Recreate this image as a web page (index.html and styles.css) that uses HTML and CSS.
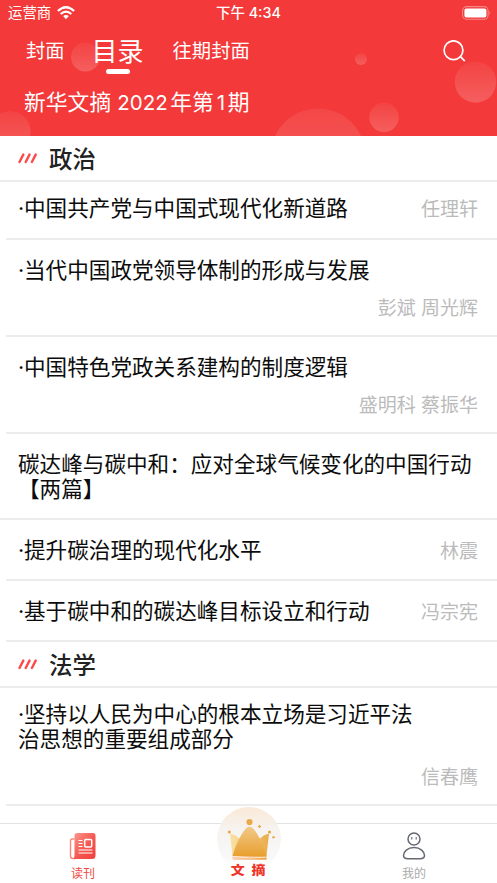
FILE: index.html
```html
<!DOCTYPE html>
<html lang="zh-CN">
<head>
<meta charset="utf-8">
<meta name="viewport" content="width=device-width">
<title>新华文摘</title>
<link rel="stylesheet" href="styles.css">
</head>
<body>
<div class="app">
  <header class="header">
    <svg class="bubbles" viewBox="0 0 497 136" aria-hidden="true">
      <defs>
        <linearGradient id="bubble" x1="0" y1="0" x2="0" y2="1">
          <stop offset="0" stop-color="#fff" stop-opacity=".05"/>
          <stop offset="1" stop-color="#fff" stop-opacity=".19"/>
        </linearGradient>
        <linearGradient id="bigBubble" x1="0" y1="0" x2="0" y2="1">
          <stop offset="0" stop-color="#fff" stop-opacity=".07"/>
          <stop offset="1" stop-color="#fff" stop-opacity=".22"/>
        </linearGradient>
      </defs>
      <g fill="url(#bubble)">
        <circle cx="85.5" cy="57" r="14.5"/>
        <circle cx="361" cy="59" r="6"/>
        <circle cx="475.5" cy="82" r="20.7"/>
        <circle cx="384" cy="117.3" r="14.7"/>
        <circle cx="10" cy="131.500" r="20.500"/>
      </g>
      <circle cx="318" cy="156" r="47.500" fill="url(#bigBubble)"/>
    </svg>
    <div class="status">
      <div class="carrier">运营商
        <svg width="18" height="14" viewBox="0 0 18 14" aria-hidden="true">
          <g fill="none" stroke="#fff" stroke-width="2.300">
            <path d="M.9 5Q9-2.600 17.100 5"/>
            <path d="M3.700 8Q9 3.200 14.300 8"/>
          </g>
          <path d="M6.100 10.100Q9 7.900 11.900 10.100L9 13.200Z" fill="#fff"/>
        </svg>
      </div>
      <div class="clock">下午 4:34</div>
      <svg class="battery" width="29" height="14" viewBox="0 0 29 14" aria-hidden="true">
        <rect x=".6" y=".6" width="25.500" height="12.600" rx="4" fill="none" stroke="#fff" stroke-opacity=".4" stroke-width="1.100"/>
        <rect x="2.400" y="2.400" width="22" height="9" rx="2" fill="#fff"/>
        <path d="M27.500 4.800q1.500 2 0 4.200z" fill="#fff" fill-opacity=".5"/>
      </svg>
    </div>
    <nav class="tabs">
      <span class="tab">封面</span>
      <span class="tab tab-active">目录</span>
      <span class="tab">往期封面</span>
      <svg class="search" width="23" height="23" viewBox="0 0 23 23" fill="none" stroke="#fff" stroke-width="1.700" aria-hidden="true">
        <circle cx="10.500" cy="10.200" r="9.400"/>
        <path d="M17 16.200l4.800 5"/>
      </svg>
    </nav>
    <h1 class="issue"><span>新华文摘</span><span class="year">2022</span><span>年第</span><span class="number">1</span><span>期</span></h1>
  </header>

  <main class="list">
    <h2 class="section">
      <svg width="20" height="11" viewBox="0 0 20 11" aria-hidden="true"><path d="M1.500 9L5.300 1.600M7.700 9L11.500 1.600M13.900 9L17.700 1.600" stroke="#fb4b4b" stroke-width="2.400" stroke-linecap="round"/></svg>
      <span>政治</span>
    </h2>
    <article class="row h58"><p><i>·</i>中国共产党与中国式现代化新道路</p><span class="author">任理轩</span></article>
    <article class="row h97"><p><i>·</i>当代中国政党领导体制的形成与发展</p><span class="author">彭斌 周光辉</span></article>
    <article class="row h97"><p><i>·</i>中国特色党政关系建构的制度逻辑</p><span class="author">盛明科 蔡振华</span></article>
    <article class="row topic"><p>碳达峰与碳中和：应对全球气候变化的中国行动<br>【两篇】</p></article>
    <article class="row h61"><p><i>·</i>提升碳治理的现代化水平</p><span class="author">林震</span></article>
    <article class="row h61"><p><i>·</i>基于碳中和的碳达峰目标设立和行动</p><span class="author">冯宗宪</span></article>
    <h2 class="section">
      <svg width="20" height="11" viewBox="0 0 20 11" aria-hidden="true"><path d="M1.500 9L5.300 1.600M7.700 9L11.500 1.600M13.900 9L17.700 1.600" stroke="#fb4b4b" stroke-width="2.400" stroke-linecap="round"/></svg>
      <span>法学</span>
    </h2>
    <article class="row h118"><p><i>·</i>坚持以人民为中心的根本立场是习近平法<br>治思想的重要组成部分</p><span class="author">信春鹰</span></article>
  </main>

  <nav class="tabbar">
    <div class="item item-active">
      <svg width="28" height="28" viewBox="0 0 28 28" aria-hidden="true">
        <defs><linearGradient id="paper" x1="0" y1="0" x2="1" y2="1"><stop offset="0" stop-color="#fb9b90"/><stop offset=".55" stop-color="#f4574f"/><stop offset="1" stop-color="#f0403d"/></linearGradient></defs>
        <path d="M5.500 7H3Q1.500 7 1.500 8.500V24q0 2.500 2.500 2.500H7" fill="none" stroke="#f8897f" stroke-width="1.400"/>
        <path d="M8 1H24q2.500 0 2.500 2.500V23.500q0 3.500-3.500 3.500H4Q5.500 26 5.500 23V3.500Q5.500 1 8 1Z" fill="url(#paper)"/>
        <path d="M9.500 8.500h4M9.500 11.500h4M9.500 14.500h4M9.500 18h14M9.500 21h14" stroke="#fff" stroke-width="1.200"/>
        <rect x="15.700" y="7.500" width="7" height="7.500" rx="1" fill="none" stroke="#fff" stroke-width="1.500"/>
      </svg>
      <span>读刊</span>
    </div>
    <div class="item center">
      <svg width="66" height="66" viewBox="0 0 66 66" aria-hidden="true">
        <defs>
          <linearGradient id="disc" x1="0" y1="0" x2="0" y2="1"><stop offset="0" stop-color="#fae9d6"/><stop offset=".35" stop-color="#f6f3f0"/><stop offset=".75" stop-color="#f8f8f8"/><stop offset="1" stop-color="#fff"/></linearGradient>
          <linearGradient id="gold" x1="0" y1="0" x2="0" y2="1"><stop offset="0" stop-color="#f1c98a"/><stop offset="1" stop-color="#e8a02e"/></linearGradient>
          <linearGradient id="wing" x1="0" y1="0" x2="1" y2="0"><stop offset="0" stop-color="#f9e2a4"/><stop offset="1" stop-color="#e9ac4c"/></linearGradient>
          <linearGradient id="base" x1="0" y1="0" x2="1" y2="0"><stop offset="0" stop-color="#f9cfb5"/><stop offset="1" stop-color="#eba443"/></linearGradient>
        </defs>
        <circle cx="33" cy="33" r="32" fill="url(#disc)"/>
        <path d="M14 27.500Q20 29 23 32.500H44Q47 29 53 27.500L50.500 50H16.500Z" fill="url(#wing)"/>
        <path d="M16.500 50C20 37 28.500 20.500 33.500 20.500C38.500 20.500 47 37 50.500 50Z" fill="url(#gold)"/>
        <path d="M16.500 50H50.500V53.700H16.500Z" fill="url(#base)"/>
        <path d="M16.500 50.400Q34 53 50.500 51.200" fill="none" stroke="#fff0dc" stroke-width=".8"/>
        <g fill="#e9a94b"><circle cx="33.500" cy="16" r="3.100"/><circle cx="13.300" cy="26" r="1.600"/><circle cx="53.500" cy="26" r="1.600"/><path d="M43.500 18.500l.8 1.200 1.200.8-1.200.8-.8 1.200-.8-1.200-1.200-.8 1.200-.8z"/><circle cx="57.500" cy="31.300" r="1.200"/></g>
      </svg>
      <span>文摘</span>
    </div>
    <div class="item">
      <svg width="28" height="28" viewBox="0 0 28 28" fill="none" stroke="#656973" stroke-width="1.500" aria-hidden="true">
        <circle cx="14" cy="7" r="6"/>
        <path d="M14 15.600C7.500 15.600 3.500 19.500 3.500 23.500C3.500 26.200 5 26.700 8 26.700H20C23 26.700 24.500 26.200 24.500 23.500C24.500 19.500 20.500 15.600 14 15.600Z"/>
        <path d="M11.800 5v2.400M16.200 5v2.400" stroke-width="1.100"/>
      </svg>
      <span>我的</span>
    </div>
  </nav>
</div>
</body>
</html>
```
FILE: styles.css
```css
* { box-sizing: border-box; }
body {
  margin: 0;
  background: #fff;
  color: #0c0c0c;
  font-family: Inter, "Noto Sans CJK SC", sans-serif;
}
h1, h2, p { margin: 0; font-weight: 400; }
svg { display: block; flex: none; }
.app {
  width: 497px;
  height: 883px;
  display: flex;
  flex-direction: column;
  overflow: hidden;
}
.header {
  position: relative;
  flex: none;
  height: 136px;
  background: #f33939;
  color: #fff;
}
.bubbles { position: absolute; inset: 0; width: 497px; height: 136px; }
.status {
  position: relative;
  display: grid;
  grid-template-columns: 1fr auto 1fr;
  align-items: center;
  height: 26px;
  padding: 0 6px 0 8px;
  font-size: 14.4px;
  line-height: 26px;
}
.carrier { display: flex; align-items: center; gap: 6px; }
.clock { font-weight: 500; padding-right: 2px; }
.battery { justify-self: end; }
.tabs {
  position: relative;
  display: flex;
  height: 50px;
  padding: 0 31px 0 26px;
  font-size: 19.3px;
  line-height: 50px;
}
.tab-active {
  margin: 0 29px 0 27px;
  font-size: 26px;
  line-height: 52px;
  display: flex;
  flex-direction: column;
  align-items: center;
}
.tab-active::after {
  content: "";
  width: 24px;
  height: 5px;
  margin-top: -9px;
  border-radius: 3px;
  background: #fff;
}
.search { margin: 14px 0 0 auto; }
.issue {
  position: relative;
  display: flex;
  padding-left: 24px;
  font-size: 21.800px;
  line-height: 53px;
}
.year { width: 59px; padding-left: 6px; font-size: 20.500px; }
.number { width: 14px; text-align: center; font-size: 20.500px; }
.list { flex: none; height: 687px; overflow: hidden; }
.section {
  display: flex;
  align-items: center;
  gap: 11px;
  height: 46px;
  padding: 0 18px;
  border-bottom: 2px solid #ececec;
  color: #222;
  font-size: 23.400px;
  font-weight: 500;
  line-height: 40px;
}
.section span { padding-top: 3px; }
.row {
  display: flex;
  flex-wrap: wrap;
  justify-content: space-between;
  align-content: space-between;
  margin-left: 6px;
  padding: 14px 19px 14px 12px;
  border-bottom: 2px solid #ececec;
  font-size: 21.600px;
  line-height: 25px;
}
.row p { white-space: nowrap; }
.row i { display: inline-block; width: 6px; font-style: normal; }
.author { margin-left: auto; color: #bbb; font-size: 19px; line-height: 27px; }
.h58 { height: 58px; }
.h97 { height: 97px; padding-top: 18px; padding-bottom: 13px; }
.h61 { height: 61px; padding-top: 18px; }
.h118 { height: 118px; padding-bottom: 13px; }
.topic { height: 86px; padding-top: 18px; margin-left: 0; padding-left: 18px; }
.h97 .author, .h118 .author { width: 100%; text-align: right; }
.tabbar {
  display: flex;
  justify-content: space-between;
  flex: none;
  height: 60px;
  padding: 0 55px;
  border-top: 1px solid #e3e3e3;
  background: #fff;
}
.item {
  width: 56px;
  padding-top: 8px;
  display: flex;
  flex-direction: column;
  align-items: center;
  color: #aaa;
  font-size: 12px;
  line-height: 28px;
}
.item-active { color: #ef4845; }
.center {
  width: 66px;
  margin-top: -18px;
  padding: 0;
  color: #ef3529;
  font-size: 12.500px;
  font-weight: 900;
  letter-spacing: 6px;
}
.center span { margin: -15px -7px 0 0; transform: scaleX(1.12); }
```
